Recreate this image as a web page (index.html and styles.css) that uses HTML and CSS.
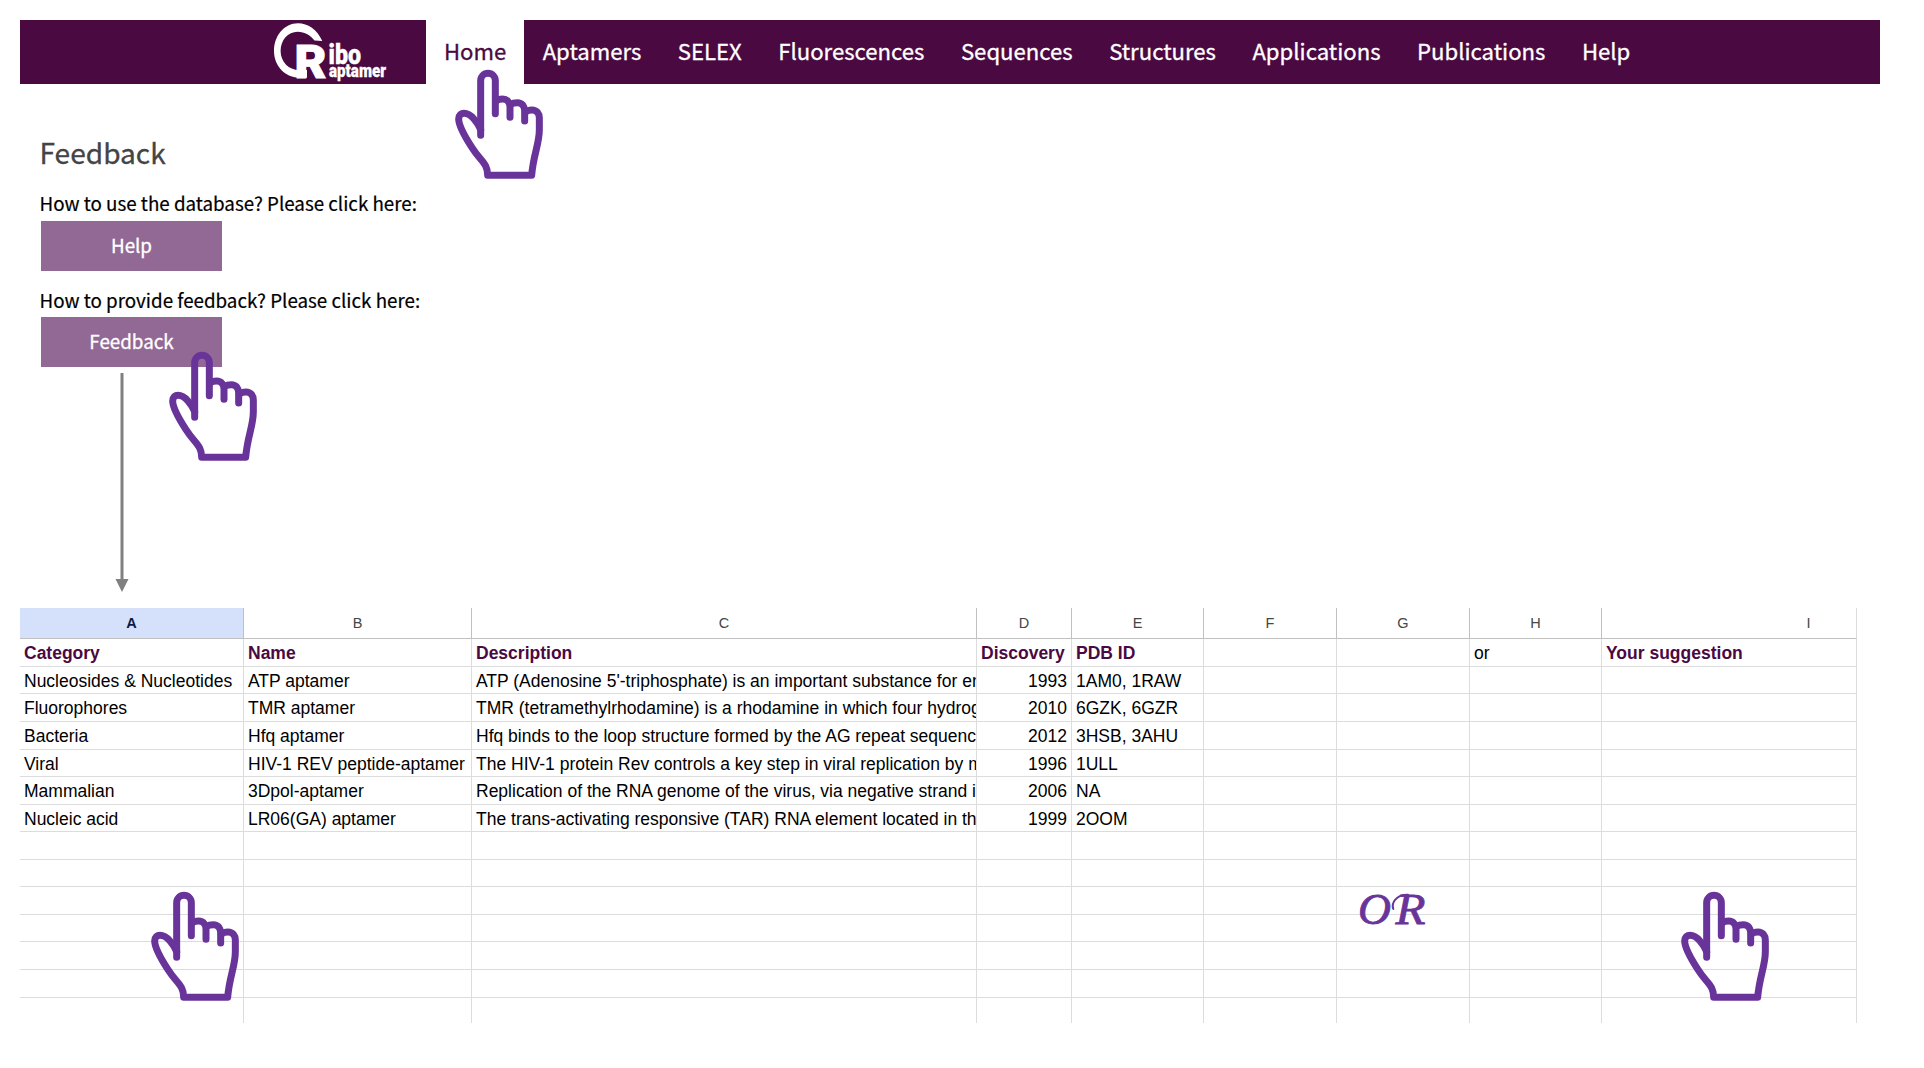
FILE: index.html
```html
<!DOCTYPE html>
<html lang="en">
<head>
<meta charset="utf-8">
<title>Ribo Aptamer - Feedback</title>
<link rel="stylesheet" href="styles.css">
</head>
<body>
<svg class="defs" width="0" height="0" aria-hidden="true">
  <symbol id="hand" viewBox="30 30 270 336">
    <g fill="none" stroke="#693499" stroke-width="21" stroke-linecap="round" stroke-linejoin="round">
      <path d="M110 232V68a22 22 0 0 1 44 0V167"/>
      <path d="M156 129Q163 123 176 123C190 123 198 134 198 148V178"/>
      <path d="M200 139Q207 134 220 134C234 134 242 145 242 159V189"/>
      <path d="M244 162Q251 156 264 156C278 156 286 167 286 180V215C286 258 268 290 263 352H131C131 315 110 310 84 269C62 235 44 203 44 183C44 171 52 166 60 166C82 166 101 195 110 215"/>
    </g>
  </symbol>
</svg>

<header class="navbar">
  <svg class="logo" width="116" height="64" viewBox="0 0 116 64" role="img" aria-label="Ribo Aptamer">
    <path d="M50.3 21C45 9.500 36 3.300 26 3.300C12 3.300 2 16 2 31C2 46 13 57.700 28 57.700H35V50H27C17 50 8.600 42 8.600 31C8.600 20 16 11.700 25.500 11.700C33 11.700 38.500 15.500 42.500 20.500Z" fill="#fff"/>
    <g class="logo-text">
      <text class="logo-mark" x="22.500" y="57.500" textLength="32" lengthAdjust="spacingAndGlyphs">R</text>
      <text class="logo-top" x="56.500" y="44" textLength="32.500" lengthAdjust="spacingAndGlyphs">ibo</text>
      <text class="logo-bottom" x="57" y="57" textLength="57" lengthAdjust="spacingAndGlyphs">aptamer</text>
    </g>
  </svg>
  <nav class="menu">
    <a class="item active">Home</a>
    <a class="item">Aptamers</a>
    <a class="item">SELEX</a>
    <a class="item">Fluorescences</a>
    <a class="item">Sequences</a>
    <a class="item">Structures</a>
    <a class="item">Applications</a>
    <a class="item">Publications</a>
    <a class="item">Help</a>
  </nav>
</header>

<main class="feedback">
  <h1>Feedback</h1>
  <p>How to use the database? Please click here:</p>
  <a class="button">Help</a>
  <p>How to provide feedback? Please click here:</p>
  <a class="button">Feedback</a>
  <svg class="arrow" width="14" height="220" viewBox="0 0 14 220"><path d="M5.500 0h3v206h5L7 219 .5 206h5z" fill="#808080"/></svg>
</main>

<section class="sheet">
  <div class="row head"><b class="selected">A</b><b>B</b><b>C</b><b>D</b><b>E</b><b>F</b><b>G</b><b>H</b><b class="wide">I</b></div>
  <div class="row titles"><span>Category</span><span>Name</span><span>Description</span><span>Discovery</span><span>PDB ID</span><span></span><span></span><span class="plain">or</span><span>Your suggestion</span></div>
  <div class="row"><span>Nucleosides &amp; Nucleotides</span><span>ATP aptamer</span><span>ATP (Adenosine 5'-triphosphate) is an important substance for en</span><span class="num">1993</span><span>1AM0, 1RAW</span><span></span><span></span><span></span><span></span></div>
  <div class="row"><span>Fluorophores</span><span>TMR aptamer</span><span>TMR (tetramethylrhodamine) is a rhodamine in which four hydrog</span><span class="num">2010</span><span>6GZK, 6GZR</span><span></span><span></span><span></span><span></span></div>
  <div class="row"><span>Bacteria</span><span>Hfq aptamer</span><span>Hfq binds to the loop structure formed by the AG repeat sequenc</span><span class="num">2012</span><span>3HSB, 3AHU</span><span></span><span></span><span></span><span></span></div>
  <div class="row"><span>Viral</span><span>HIV-1 REV peptide-aptamer</span><span>The HIV-1 protein Rev controls a key step in viral replication by m</span><span class="num">1996</span><span>1ULL</span><span></span><span></span><span></span><span></span></div>
  <div class="row"><span>Mammalian</span><span>3Dpol-aptamer</span><span>Replication of the RNA genome of the virus, via negative strand i</span><span class="num">2006</span><span>NA</span><span></span><span></span><span></span><span></span></div>
  <div class="row"><span>Nucleic acid</span><span>LR06(GA) aptamer</span><span>The trans-activating responsive (TAR) RNA element located in th</span><span class="num">1999</span><span>2OOM</span><span></span><span></span><span></span><span></span></div>
  <div class="row"><span></span><span></span><span></span><span></span><span></span><span></span><span></span><span></span><span></span></div>
  <div class="row"><span></span><span></span><span></span><span></span><span></span><span></span><span></span><span></span><span></span></div>
  <div class="row"><span></span><span></span><span></span><span></span><span></span><span></span><span></span><span></span><span></span></div>
  <div class="row"><span></span><span></span><span></span><span></span><span></span><span></span><span></span><span></span><span></span></div>
  <div class="row"><span></span><span></span><span></span><span></span><span></span><span></span><span></span><span></span><span></span></div>
  <div class="row"><span></span><span></span><span></span><span></span><span></span><span></span><span></span><span></span><span></span></div>
  <div class="row last"><span></span><span></span><span></span><span></span><span></span><span></span><span></span><span></span><span></span></div>
</section>

<svg class="hand hand-home"><use href="#hand"/></svg>
<svg class="hand hand-feedback"><use href="#hand"/></svg>
<svg class="hand hand-category"><use href="#hand"/></svg>
<svg class="hand hand-suggestion"><use href="#hand"/></svg>
<svg class="or" width="100" height="60" viewBox="0 0 100 60">
  <text x="18" y="44" textLength="33" lengthAdjust="spacingAndGlyphs">O</text>
  <text x="55.500" y="43.500" textLength="30" lengthAdjust="spacingAndGlyphs">R</text>
  <path d="M53.300 29C51 23 56 14.600 68 14.800" fill="none" stroke="#693499" stroke-width="2" stroke-linecap="round"/>
</svg>
</body>
</html>
```
FILE: styles.css
```css
* { box-sizing: border-box; }
body {
  margin: 0;
  padding: 20px 44px 0 20px;
  height: 1068px;
  position: relative;
  overflow: hidden;
  background: #fff;
  color: #000;
  font-family: "Noto Sans CJK SC", "Noto Sans", sans-serif;
}
.defs { display: block; height: 0; }

.navbar {
  display: flex;
  height: 64px;
  padding-left: 252px;
  background: #4b0942;
}
.logo { flex: none; margin-right: 37.700px; overflow: visible; }
.logo-text { font-family: Roboto, "Liberation Sans", sans-serif; font-weight: 900; fill: #fff; stroke: #fff; }
.logo-mark { font-size: 46px; stroke-width: 1px; }
.logo-top { font-size: 27px; stroke-width: .4px; }
.logo-bottom { font-size: 18.500px; stroke-width: .3px; }
.menu { display: flex; }
.item {
  padding: 0 18.220px;
  line-height: 60px;
  font-size: 22.150px;
  color: #fff;
  white-space: nowrap;
  -webkit-text-stroke: .3px currentColor;
}
.item.active { background: #fff; color: #4b0942; }

.feedback {
  display: flex;
  flex-direction: column;
  align-items: flex-start;
  height: 524px;
  padding: 50px 0 0 19.500px;
}
h1 {
  margin: 0;
  font-size: 28.100px;
  font-weight: 400;
  line-height: 36px;
  color: #444;
  -webkit-text-stroke: .3px currentColor;
}
p {
  margin: 18px 0 3px;
  font-size: 18.780px;
  line-height: 30px;
  -webkit-text-stroke: .2px currentColor;
}
.button {
  width: 181px;
  height: 50px;
  margin-left: 1.500px;
  background: #926995;
  color: #fff;
  font-size: 18.780px;
  line-height: 48px;
  text-align: center;
  -webkit-text-stroke: .3px currentColor;
}
.button + p { margin: 14px 0 2px; }
.arrow { margin: 6px 0 0 75.500px; }

.sheet {
  width: 1837px;
  font: 17.500px/28px "Liberation Sans", Arial, sans-serif;
}
.row {
  display: grid;
  grid-template-columns: 224px 228px 505px 95px 132px 133px 133px 132px 255px;
  height: 27.570px;
}
.row > * {
  overflow: hidden;
  padding: 0 4px;
  border-right: 1px solid #dcdcdc;
  border-bottom: 1px solid #dcdcdc;
  white-space: nowrap;
}
.row > :nth-child(3) { padding-right: 0; }
.row.head { height: 31.300px; }
.row.head b:nth-child(3) { padding: 0 3px; }
.head b {
  font-size: 14.500px;
  font-weight: 400;
  line-height: 30px;
  text-align: center;
  color: #444746;
  border-color: #c0c0c0;
}
.head .selected { background: #d5e1fb; color: #0b1d46; font-weight: 700; }
.head .wide { padding-left: 163px; border-right-color: #dcdcdc; }
.titles span { color: #4b0942; font-weight: 700; }
.titles .plain { color: #000; font-weight: 400; }
.num { text-align: right; }
.row.last { height: 25px; }
.last span { border-bottom: 0; }

.hand { position: absolute; width: 90px; height: 112px; }
.hand-home { left: 454.400px; top: 68.300px; }
.hand-feedback { left: 168px; top: 349.500px; }
.hand-category { left: 150px; top: 890px; }
.hand-suggestion { left: 1680px; top: 890px; }
.or {
  position: absolute;
  left: 1340px;
  top: 880px;
  fill: #693499;
  stroke: #693499;
  stroke-width: .8px;
  font: italic 45px "Liberation Serif", serif;
}
```
